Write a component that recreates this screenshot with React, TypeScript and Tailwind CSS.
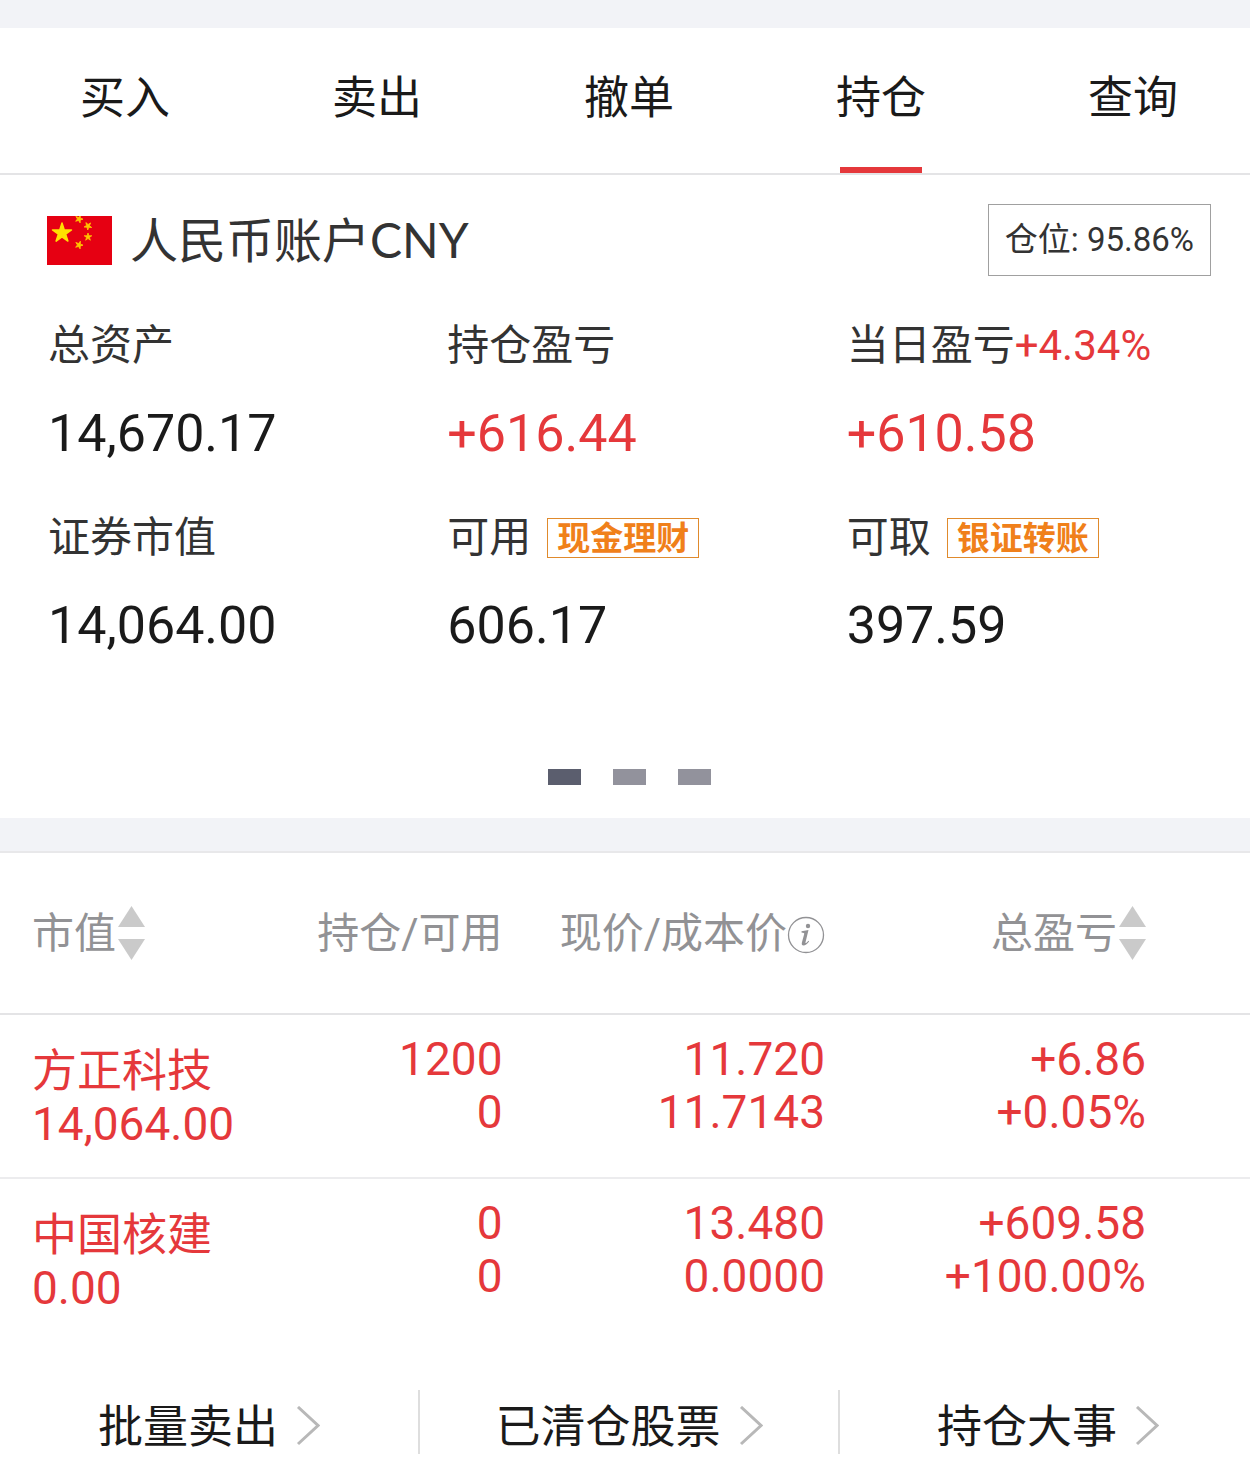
import React from "react";

const tabs = ["买入", "卖出", "撤单", "持仓", "查询"];

const rows = [
  { name: "方正科技", value: "14,064.00", held: "1200", free: "0", price: "11.720", cost: "11.7143", pl: "+6.86", pct: "+0.05%" },
  { name: "中国核建", value: "0.00", held: "0", free: "0", price: "13.480", cost: "0.0000", pl: "+609.58", pct: "+100.00%" },
];

function Flag() {
  const star = "M0,-10 L2.25,-3.1 9.5,-3.1 3.63,1.18 5.88,8.1 0,3.8 -5.88,8.1 -3.63,1.18 -9.5,-3.1 -2.25,-3.1Z";
  return (
    <svg className="h-[49px] w-[65px] shrink-0" viewBox="0 0 65 49" aria-hidden="true">
      <rect width="65" height="49" fill="#e60012" />
      <g fill="#ffe100" stroke="#ffe100" strokeLinejoin="round">
        <path d={star} transform="translate(15 17)" strokeWidth="1.500" />
      </g>
      <g fill="#ffc400" stroke="#ffc400" strokeWidth="2" strokeLinejoin="round">
        <path d={star} transform="translate(32 3) scale(.4) rotate(20)" />
        <path d={star} transform="translate(41 10) scale(.4) rotate(40)" />
        <path d={star} transform="translate(41 21) scale(.4)" />
        <path d={star} transform="translate(32 29) scale(.4) rotate(20)" />
      </g>
    </svg>
  );
}

function Sort() {
  return (
    <svg className="ml-0.5 h-[54px] w-[27px] shrink-0" viewBox="0 0 27 54" fill="#cacaca" aria-hidden="true">
      <path d="M13.500 0 27 21H0Z" />
      <path d="M0 33H27L13.500 54Z" />
    </svg>
  );
}

function Info() {
  return (
    <svg className="mt-1 h-[38px] w-[38px] shrink-0" viewBox="0 0 38 38" aria-hidden="true">
      <circle cx="19" cy="19" r="17.500" fill="none" stroke="#929295" strokeWidth="1.300" />
      <circle cx="21" cy="10" r="2.200" fill="#929295" />
      <path d="M14.500 15.300 21.500 14 18.500 26.200Q18.300 27.400 19.200 26.900L21.500 24.700 22.100 25.400Q19 29.500 16.500 29.500 14.200 29.500 14.900 26.500L17.200 18Q17.500 16.500 14.500 16.500Z" fill="#929295" />
    </svg>
  );
}

function Chevron() {
  return (
    <svg className="h-10 w-6 shrink-0" viewBox="0 0 24 40" fill="none" stroke="#b8b8b8" strokeWidth="3" aria-hidden="true">
      <path d="M2 1 22 19.500 2 38" />
    </svg>
  );
}

type StatProps = { label: string; value: string; red?: boolean; extra?: React.ReactNode };

function Stat({ label, value, red, extra }: StatProps) {
  return (
    <div className="whitespace-nowrap">
      <dt className="flex h-16 items-center pt-0.5 text-[42px] text-[#333]">
        {label}
        {extra}
      </dt>
      <dd className={`mt-5 flex h-[72px] items-center pt-1 text-[52px] ${red ? "text-[#e5383b]" : "text-[#1a1a1a]"}`}>{value}</dd>
    </div>
  );
}

function Tag({ children }: { children: string }) {
  return (
    <button className="ml-4 mt-0.5 flex h-10 items-center border border-[#e08a2c] px-[9px] text-[33px] font-bold leading-none text-[#f0801a]">
      {children}
    </button>
  );
}

export default function App() {
  return (
    <main className="w-full bg-white font-[Roboto,'Noto_Sans_CJK_SC',sans-serif] text-[#1a1a1a]">
      <div className="h-7 bg-[#f2f3f7]" />
      <nav className="flex h-[147px] justify-between border-b-2 border-[#e4e4e6] pl-20 pr-[72px]">
        {tabs.map((t) => (
          <button key={t} className="relative pb-1 text-[45px]">
            {t}
            {t === "持仓" && <span className="absolute bottom-0 left-1/2 h-1.5 w-[82px] -translate-x-1/2 bg-[#e5383b]" />}
          </button>
        ))}
      </nav>

      <section className="pb-[33px] pt-[29px]">
        <header className="flex h-[72px] items-center justify-between pl-[47px] pr-[39px]">
          <h1 className="flex items-center gap-[18px] font-[Lato,'Noto_Sans_CJK_SC',sans-serif] text-[48px] text-[#333]">
            <Flag />
            人民币账户CNY
          </h1>
          <button className="h-[72px] border border-[#a0a0a0] px-4 text-[33px] text-[#333]">仓位: 95.86%</button>
        </header>
        <dl className="mt-9 grid grid-cols-3 gap-y-9 pl-12 pr-1">
          <Stat label="总资产" value="14,670.17" />
          <Stat label="持仓盈亏" value="+616.44" red />
          <Stat label="当日盈亏" value="+610.58" red extra={<span className="text-[#e5383b]">+4.34%</span>} />
          <Stat label="证券市值" value="14,064.00" />
          <Stat label="可用" value="606.17" extra={<Tag>现金理财</Tag>} />
          <Stat label="可取" value="397.59" extra={<Tag>银证转账</Tag>} />
        </dl>
        <div className="mt-[109px] flex justify-center gap-8 pl-2">
          <span className="h-4 w-[33px] bg-[#5b5e6e]" />
          <span className="h-4 w-[33px] bg-[#92929c]" />
          <span className="h-4 w-[33px] bg-[#92929c]" />
        </div>
      </section>
      <div className="h-[35px] border-b-2 border-[#e8e8ea] bg-[#f2f3f7]" />

      <table className="w-full table-fixed whitespace-nowrap text-right">
        <thead className="text-[42px] text-[#929295]">
          <tr className="h-[161px] border-b-2 border-[#e4e4e6]">
            <th className="w-[23%] pl-8 text-left font-normal"><button className="flex items-center">市值<Sort /></button></th>
            <th className="w-[17.2%] font-normal"><span className="flex justify-end">持仓/可用</span></th>
            <th className="w-[25.8%] font-normal"><span className="flex items-center justify-end">现价/成本价<Info /></span></th>
            <th className="pr-[104px] font-normal"><button className="ml-auto flex items-center">总盈亏<Sort /></button></th>
          </tr>
        </thead>
        <tbody className="text-[46px] leading-[53px] text-[#e5383b]">
          {rows.map((r) => (
            <tr key={r.name} className="h-[164px] border-b-2 border-[#ececee] align-top last:border-b-0">
              <td className="pl-8 pt-[30px] text-left"><div className="text-[45px] leading-[53px]">{r.name}</div>{r.value}</td>
              <td className="pt-[18px]">{r.held}<br />{r.free}</td>
              <td className="pt-[18px]">{r.price}<br />{r.cost}</td>
              <td className="pr-[104px] pt-[18px]">{r.pl}<br />{r.pct}</td>
            </tr>
          ))}
        </tbody>
      </table>

      <footer className="mt-12 grid h-16 grid-cols-[42fr_42fr_41fr] divide-x-2 divide-[#dedede] text-[45px]">
        {["批量卖出", "已清仓股票", "持仓大事"].map((t) => (
          <button key={t} className="flex items-center justify-center gap-[18px] last:pl-1.5">
            <span className="pt-1">{t}</span>
            <Chevron />
          </button>
        ))}
      </footer>
    </main>
  );
}
